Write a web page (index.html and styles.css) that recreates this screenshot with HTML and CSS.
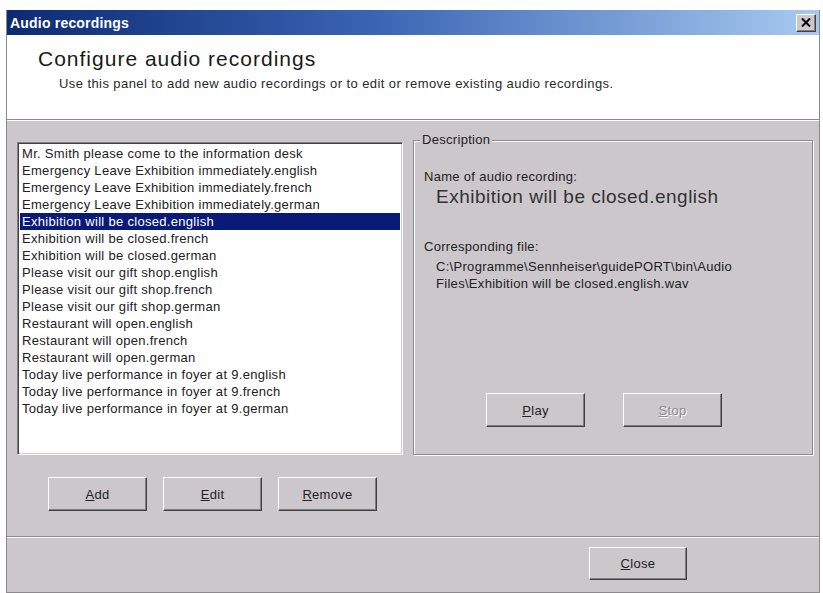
FILE: index.html
```html
<!DOCTYPE html>
<html><head>
<title>Audio recordings</title>
<link rel="stylesheet" href="styles.css">
</head><body>
<div class="window">
  <div class="titlebar">
    <span class="title">Audio recordings</span>
    <span class="closebox"><svg width="10" height="9" viewBox="0 0 10 9"><path d="M1 0.5 L9 8.5 M9 0.5 L1 8.5" stroke="#000" stroke-width="2"/></svg></span>
  </div>
  <div class="header">
    <h1>Configure audio recordings</h1>
    <p class="sub">Use this panel to add new audio recordings or to edit or remove existing audio recordings.</p>
  </div>
  <div class="main">
    <div class="leftcol">
      <div class="listbox">
        <div class="row">Mr. Smith please come to the information desk</div>
        <div class="row">Emergency Leave Exhibition immediately.english</div>
        <div class="row">Emergency Leave Exhibition immediately.french</div>
        <div class="row">Emergency Leave Exhibition immediately.german</div>
        <div class="row sel">Exhibition will be closed.english</div>
        <div class="row">Exhibition will be closed.french</div>
        <div class="row">Exhibition will be closed.german</div>
        <div class="row">Please visit our gift shop.english</div>
        <div class="row">Please visit our gift shop.french</div>
        <div class="row">Please visit our gift shop.german</div>
        <div class="row">Restaurant will open.english</div>
        <div class="row">Restaurant will open.french</div>
        <div class="row">Restaurant will open.german</div>
        <div class="row">Today live performance in foyer at 9.english</div>
        <div class="row">Today live performance in foyer at 9.french</div>
        <div class="row">Today live performance in foyer at 9.german</div>
      </div>
      <div class="btnrow">
        <button class="btn"><u>A</u>dd</button>
        <button class="btn"><u>E</u>dit</button>
        <button class="btn"><u>R</u>emove</button>
      </div>
    </div>
    <fieldset class="group">
      <legend>Description</legend>
      <div class="lbl">Name of audio recording:</div>
      <div class="value">Exhibition will be closed.english</div>
      <div class="lbl second">Corresponding file:</div>
      <div class="path">C:\Programme\Sennheiser\guidePORT\bin\Audio Files\Exhibition will be closed.english.wav</div>
      <div class="playrow">
        <button class="btn"><u>P</u>lay</button>
        <button class="btn off"><u>S</u>top</button>
      </div>
    </fieldset>
  </div>
  <div class="footer">
    <button class="btn"><u>C</u>lose</button>
  </div>
</div>
</body></html>
```

FILE: styles.css
```css
body {margin: 0; background: #fff; font-family: "Liberation Sans", Arial, sans-serif; color: #222;}
.window {margin: 10px 0 0 6px; width: 814px; box-sizing: border-box; background: #cbc7cb; border: 1px solid #8c898c; border-top: 0;}
.titlebar {height: 25px; display: flex; align-items: center; justify-content: space-between; padding: 0 3px; background: linear-gradient(to right, #0c2a72, #3a64b4 45%, #a8caf0);}
.title {color: #fff; font-weight: bold; font-size: 14px; letter-spacing: 0.2px;}
.closebox {width: 20px; height: 18px; box-sizing: border-box; display: flex; align-items: center; justify-content: center; background: #cbc7cb; border: 1px solid; border-color: #fff #404040 #404040 #fff; box-shadow: inset -1px -1px #808080;}
.header {height: 85px; box-sizing: border-box; background: #fff; border-bottom: 1px solid #8c898c; padding: 12px 0 0 31px;}
h1 {margin: 0; font-size: 21px; line-height: 24px; font-weight: normal; letter-spacing: 1px; color: #1a1a1a;}
.sub {margin: 5px 0 0 21px; font-size: 13px; line-height: 16px; letter-spacing: 0.42px; color: #2a2a2a;}
.main {height: 416px; box-sizing: border-box; border-top: 1px solid #fff; padding: 11px 0 0 10px; display: flex; align-items: flex-start;}
.listbox {margin-top: 10px; width: 386px; height: 313px; box-sizing: border-box; padding: 2px; background: #fff; border: 1px solid; border-color: #808080 #fff #fff #808080; box-shadow: inset 1px 1px #404040, inset -1px -1px #d4d0c8;}
.row {font-size: 13px; line-height: 17px; letter-spacing: 0.3px; padding-left: 2px; white-space: nowrap;}
.row.sel {background: #0a1a78; color: #fff;}
.btnrow {margin-top: 22px; padding-left: 31px; display: flex; gap: 16px;}
.btn {width: 99px; height: 34px; box-sizing: border-box; background: #cbc7cb; font-family: inherit; font-size: 13px; letter-spacing: 0.3px; color: #222; border: 1px solid; border-color: #fff #404040 #404040 #fff; box-shadow: inset -1px -1px #808080; padding: 0;}
.btn.off {color: #8e8a8e; text-shadow: 1px 1px #fff;}
.group {margin: 0 0 0 10px; width: 400px; box-sizing: border-box; padding: 20px 10px 27px 10px; border: 1px solid #8c898c; box-shadow: inset 1px 1px #fff, 1px 1px #fff;}
legend {font-size: 13px; line-height: 16px; letter-spacing: 0.3px; padding: 0 2px; margin-left: -4px; background: #cbc7cb;}
.lbl {font-size: 13px; line-height: 17px; letter-spacing: 0.3px;}
.lbl.second {margin-top: 29px;}
.value {margin-left: 12px; font-size: 19px; line-height: 24px; letter-spacing: 0.5px; color: #333;}
.path {margin: 3px 0 0 12px; width: 340px; font-size: 13px; line-height: 17px; letter-spacing: 0.3px;}
.playrow {margin: 101px 0 0 62px; display: flex; gap: 38px;}
.footer {height: 56px; box-sizing: border-box; border-top: 1px solid #8c898c; box-shadow: inset 0 1px #fff; padding: 10px 132px 0 0; display: flex; justify-content: flex-end; align-items: flex-start;}
.footer .btn {height: 33px; width: 98px;}
```
